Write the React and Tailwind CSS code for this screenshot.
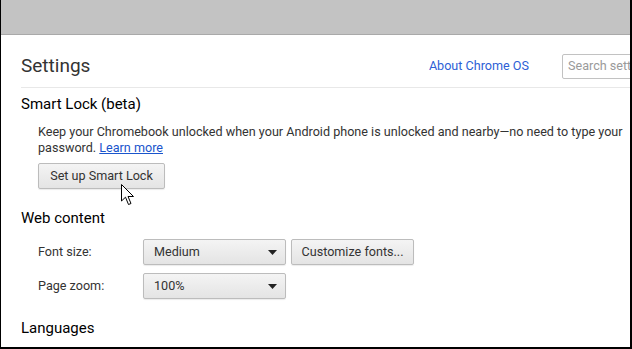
import React from "react";

function Caret() {
  return (
    <svg width="9" height="5" viewBox="0 0 9 5" className="shrink-0">
      <path d="M0 0 H9 L4.5 5 Z" fill="#222" />
    </svg>
  );
}

function Cursor() {
  return (
    <svg width="14" height="22" viewBox="0 0 14 22" className="absolute left-[120px] top-[184px]">
      <path d="M0.5 0.5 V17 L4.5 13.2 L7.5 20.5 L10 19.5 L7 12.5 H12.5 Z" fill="#fff" stroke="#000" strokeWidth="1" strokeLinejoin="miter" />
    </svg>
  );
}

export default function App() {
  const btn =
    "h-[26px] rounded-[2px] border border-[#bcbcbc] bg-gradient-to-b from-[#f4f4f4] to-[#e4e4e4] shadow-[0_1px_1px_rgba(0,0,0,0.08)] text-[12.6px] text-[#333] flex items-center";
  return (
    <div
      className="relative w-[632px] h-[349px] overflow-hidden bg-white border-l border-r-2 border-b-2 border-black"
      style={{ fontFamily: "Roboto, 'Liberation Sans', sans-serif" }}
    >
      <div className="h-[35px] bg-[#c3c3c3] border-b border-[#a9a9a9]" />
      <div className="pl-[20px]">
        <div className="flex items-start h-[53px] border-b border-[#e8e8e8] pt-[21px]">
          <div className="text-[19px] text-[#333] leading-none">Settings</div>
          <div className="ml-auto flex items-center -mt-[2px]">
            <span className="text-[12.6px] text-[#2d5fd6] mr-[33px]">About Chrome OS</span>
            <div className="w-[80px] h-[25px] -mr-[12px] border border-[#c2c2c2] rounded-[2px] flex items-center pl-[5px] text-[12.6px] text-[#9a9a9a] overflow-hidden whitespace-nowrap">
              Search settings
            </div>
          </div>
        </div>
        <div className="text-[15px] text-black mt-[7px] leading-[18px]">Smart Lock (beta)</div>
        <div className="pl-[17px] mt-[11px] text-[12.6px] text-[#333] leading-[16px] whitespace-nowrap">
          <div>Keep your Chromebook unlocked when your Android phone is unlocked and nearby—no need to type your</div>
          <div>
            password. <span className="text-[#1a55cc] underline">Learn more</span>
          </div>
          <div className={btn + " mt-[7px] w-[127px] justify-center"}>Set up Smart Lock</div>
        </div>
        <div className="text-[15px] text-black mt-[20px] leading-[18px]">Web content</div>
        <div className="pl-[17px] mt-[12px] text-[12.6px] text-[#333] flex flex-col gap-[8px]">
          <div className="flex items-center">
            <span className="w-[105px]">Font size:</span>
            <div className={btn + " w-[143px] pl-[10px] pr-[8px] justify-between"}>
              <span>Medium</span>
              <Caret />
            </div>
            <div className={btn + " ml-[5px] w-[123px] justify-center"}>Customize fonts...</div>
          </div>
          <div className="flex items-center">
            <span className="w-[105px]">Page zoom:</span>
            <div className={btn + " w-[143px] pl-[10px] pr-[8px] justify-between"}>
              <span>100%</span>
              <Caret />
            </div>
          </div>
        </div>
        <div className="text-[15px] text-black mt-[20px] leading-[18px]">Languages</div>
      </div>
      <Cursor />
    </div>
  );
}
